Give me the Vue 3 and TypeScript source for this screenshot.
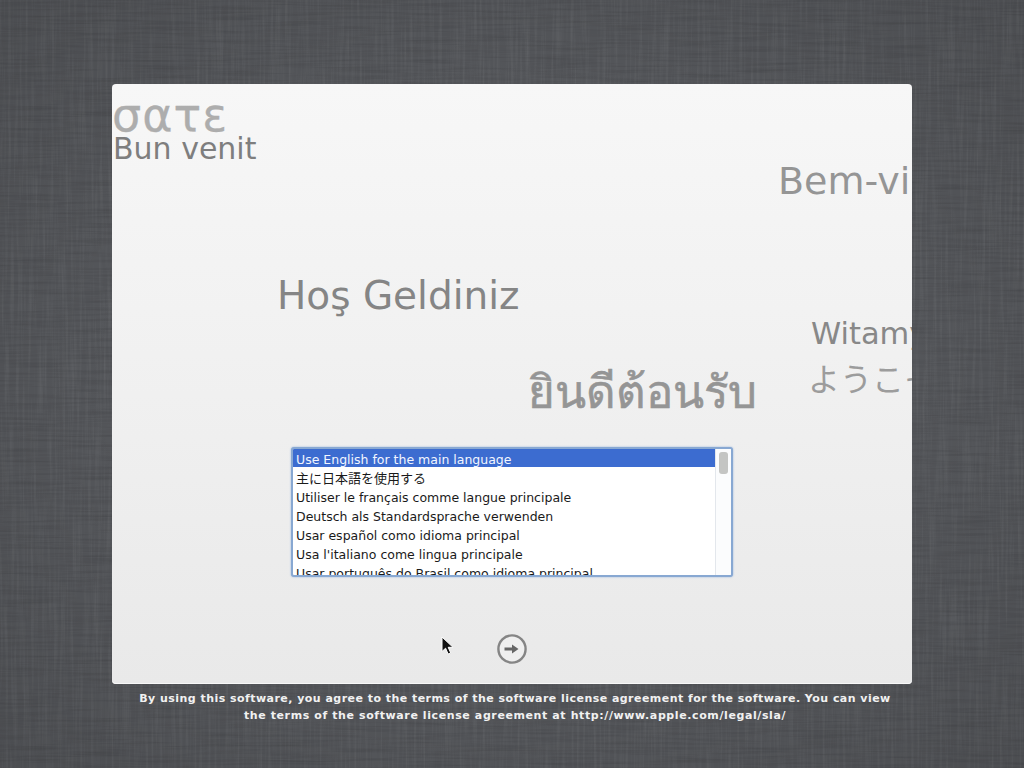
<template>
  <div class="screen">
    <svg class="linen" width="1024" height="768" aria-hidden="true">
      <filter id="threads-v" x="0" y="0" width="100%" height="100%">
        <feTurbulence type="fractalNoise" baseFrequency="0.35 0.012" numOctaves="3" seed="4" />
        <feColorMatrix values="0 0 0 0 1  0 0 0 0 1  0 0 0 0 1  1.6 0 0 0 -0.68" />
      </filter>
      <filter id="threads-h" x="0" y="0" width="100%" height="100%">
        <feTurbulence type="fractalNoise" baseFrequency="0.015 0.4" numOctaves="3" seed="9" />
        <feColorMatrix values="0 0 0 0 0  0 0 0 0 0  0 0 0 0 0  1.6 0 0 0 -0.68" />
      </filter>
      <radialGradient id="vignette" cx="50%" cy="50%" r="70%">
        <stop offset="0.55" stop-color="#000" stop-opacity="0" />
        <stop offset="1" stop-color="#000" stop-opacity="0.1" />
      </radialGradient>
      <rect width="1024" height="768" filter="url(#threads-v)" opacity="0.08" />
      <rect width="1024" height="768" filter="url(#threads-h)" opacity="0.12" />
      <rect width="1024" height="768" fill="url(#vignette)" />
    </svg>

    <div class="panel">
      <span
        v-for="word in words"
        :key="word.text"
        class="word"
        :class="word.kind"
      >{{ word.text }}</span>

      <div class="list">
        <div class="rows">
          <div
            v-for="(lang, i) in languages"
            :key="lang"
            class="row"
            :class="{ selected: i === 0, cjk: i === 1 }"
          >{{ lang }}</div>
        </div>
        <div class="scrollbar"><div class="thumb"></div></div>
      </div>

      <div class="actions">
        <button class="next" type="button" aria-label="Continue">
          <svg width="30" height="30" viewBox="0 0 30 30">
            <circle cx="15" cy="15" r="13.6" fill="#efefef" stroke="#858585" stroke-width="2.4" />
            <path d="M7.5 13.5h7.5V10.4l6.5 4.6-6.5 4.6v-3.1H7.5z" fill="#666" />
          </svg>
        </button>
      </div>

      <svg class="cursor" width="13" height="20" viewBox="0 0 13 20">
        <path d="M1 1v14.5l3.6-3.3 2.5 5.8 2.6-1.1-2.5-5.6H12z" fill="#111" stroke="#fff" stroke-width="1" />
      </svg>
    </div>

    <p class="legal">
      By using this software, you agree to the terms of the software license agreement for the software. You can view<br />
      <span class="legal-second">the terms of the software license agreement at http://www.apple.com/legal/sla/</span>
    </p>
  </div>
</template>

<script setup lang="ts">
const words = [
  { text: "σατε", kind: "greek" },
  { text: "Bun venit", kind: "bun" },
  { text: "Bem-vindo", kind: "bem" },
  { text: "Hoş Geldiniz", kind: "hos" },
  { text: "Witamy", kind: "witamy" },
  { text: "ようこそ", kind: "yokoso" },
  { text: "ยินดีต้อนรับ", kind: "thai" }
];

const languages = [
  "Use English for the main language",
  "主に日本語を使用する",
  "Utiliser le français comme langue principale",
  "Deutsch als Standardsprache verwenden",
  "Usar español como idioma principal",
  "Usa l'italiano come lingua principale",
  "Usar português do Brasil como idioma principal"
];
</script>

<style>
html,
body {
  margin: 0;
  background: #505256;
}
</style>

<style scoped>
.screen {
  position: relative;
  width: 1024px;
  height: 768px;
  overflow: hidden;
  box-sizing: border-box;
  padding-top: 84px;
  font-family: "DejaVu Sans", "Noto Sans CJK JP", sans-serif;
  background-color: #54565a;
}

.linen {
  position: absolute;
  left: 0;
  top: 0;
}

.panel {
  position: relative;
  width: 800px;
  height: 600px;
  margin: 0 auto;
  overflow: hidden;
  box-sizing: border-box;
  padding-top: 363px;
  border-radius: 4px;
  background: linear-gradient(180deg, #f7f7f7 0%, #f1f1f1 45%, #e9e9e9 100%);
  box-shadow: inset 0 -1px 0 #f8f8f8;
}

.word {
  position: absolute;
  white-space: nowrap;
  line-height: 1;
}

.greek {
  left: 0;
  top: 8px;
  font-size: 46px;
  letter-spacing: 1px;
  color: #adadad;
  -webkit-text-stroke: 0.3px #adadad;
}

.bun {
  left: 1px;
  top: 50px;
  font-size: 30px;
  color: #7e7e7e;
}

.bem {
  left: 666px;
  top: 78px;
  font-size: 38px;
  color: #959595;
}

.hos {
  left: 165px;
  top: 192px;
  font-size: 39px;
  color: #858585;
}

.witamy {
  left: 699px;
  top: 235px;
  font-size: 30.5px;
  color: #888;
}

.yokoso {
  left: 696px;
  top: 280px;
  font-size: 32px;
  color: #9c9c9c;
}

.thai {
  left: 416px;
  top: 286px;
  font-size: 45.5px;
  color: #959595;
  -webkit-text-stroke: 0.6px #959595;
}

.list {
  display: flex;
  width: 442px;
  height: 130px;
  margin-left: 179px;
  box-sizing: border-box;
  border: 2px solid #88a8d2;
  border-radius: 3px;
  overflow: hidden;
  background: #fff;
  box-shadow: 0 0 2px #8fb0dc;
}

.rows {
  flex: 1;
  min-width: 0;
  overflow: hidden;
}

.row {
  height: 19px;
  padding-left: 3px;
  font-size: 12.5px;
  line-height: 21px;
  white-space: nowrap;
  color: #1a1a1a;
}

.row.cjk {
  font-size: 13px;
}

.row.selected {
  height: 18px;
  margin-bottom: 1px;
  background: #3c6cd0;
  color: #f2f6ff;
}

.scrollbar {
  flex: none;
  width: 16px;
  box-sizing: border-box;
  padding: 3px 3px 0;
  border-left: 1px solid #e3e7ec;
  background: #fbfcfd;
}

.thumb {
  width: 9px;
  height: 22px;
  border-radius: 3px;
  background: #c4c5c3;
}

.actions {
  display: flex;
  justify-content: center;
  margin-top: 57px;
}

.next {
  display: block;
  width: 30px;
  height: 30px;
  padding: 0;
  border: none;
  background: none;
}

.cursor {
  position: absolute;
  left: 329px;
  top: 552px;
}

.legal {
  position: relative;
  margin: 6px 0 0;
  padding-left: 6px;
  text-align: center;
  font-size: 11px;
  font-weight: 700;
  line-height: 17px;
  letter-spacing: 0.46px;
  color: #f1f1f1;
}

.legal-second {
  letter-spacing: 0.6px;
}
</style>
